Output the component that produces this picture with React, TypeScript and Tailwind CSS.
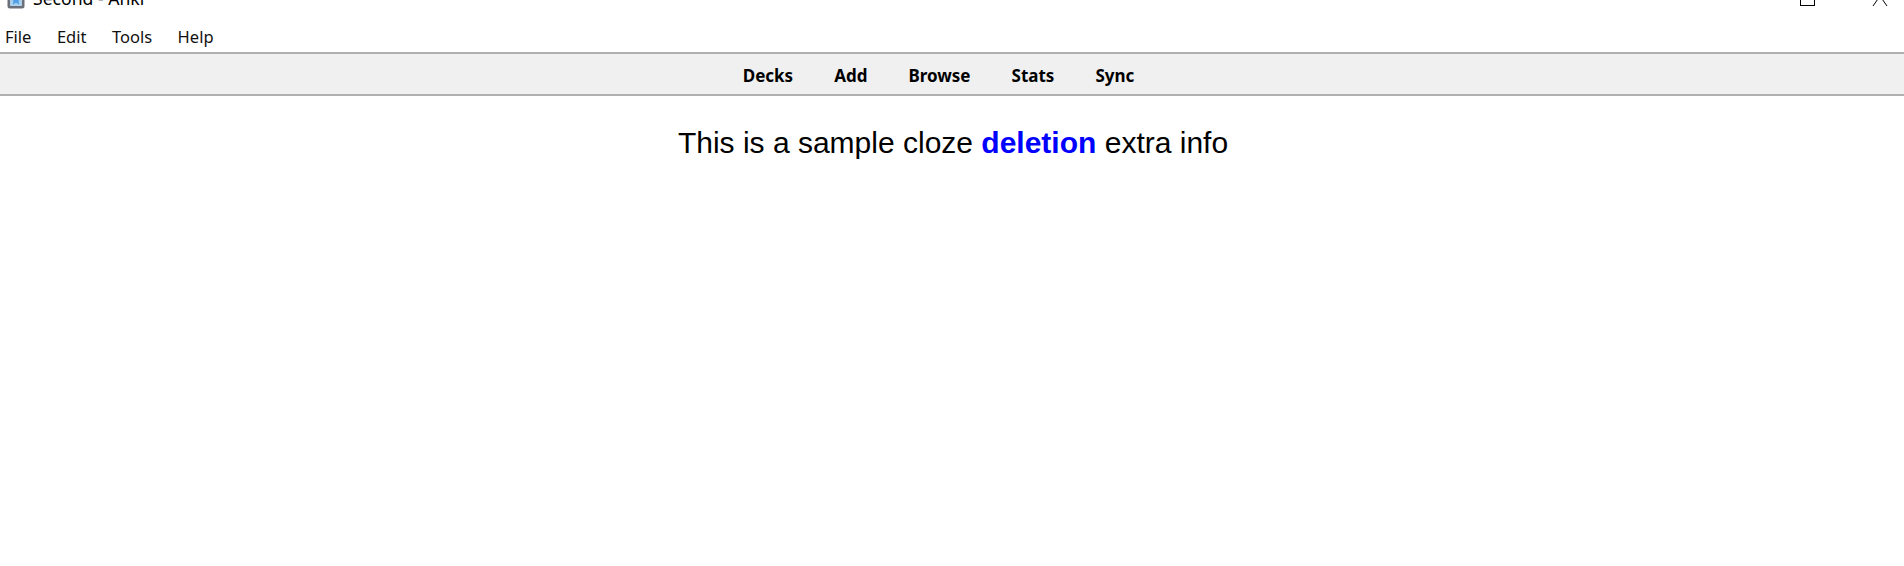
export default function App() {
  const menus = ["File", "Edit", "Tools", "Help"];
  const links = ["Decks", "Add", "Browse", "Stats", "Sync"];
  return (
    <div className="h-[566px] w-[1904px] overflow-hidden bg-white">
      <div className="flex h-[20px] items-start justify-between overflow-hidden bg-white">
        <div className="flex items-start">
          <svg className="ml-[7px] mt-[-9px]" width="18" height="18" viewBox="0 0 18 18">
            <rect x="0.5" y="0.5" width="17" height="17" rx="2.5" fill="#6b6f78" />
            <rect x="3" y="1" width="12" height="14" fill="#a9cfee" />
            <path d="M9 4l1.6 3.3 3.4.4-2.5 2.4.7 3.4L9 11.8l-3.2 1.7.7-3.4L4 7.7l3.4-.4z" fill="#4f9fe6" />
          </svg>
          <span className="ml-[8px] mt-[-14px] font-['Noto_Sans',sans-serif] text-[17.6px] leading-[24px] text-black">Second - Anki</span>
        </div>
        <div className="flex items-start">
          <div className="mr-[57px] mt-[-10px] h-[16px] w-[15px] border border-black" />
          <svg className="mr-[16px] mt-[-5px]" width="16" height="12" viewBox="0 0 16 12" fill="none" stroke="#000" strokeWidth="1">
            <path d="M1 11L8 1l7 10" />
          </svg>
        </div>
      </div>
      <div className="flex h-[32px] items-center gap-[25.5px] pl-[5px] pt-[2px] font-['Noto_Sans',sans-serif] text-[16.5px] text-[#111]">
        {menus.map((m) => (
          <span key={m}>{m}</span>
        ))}
      </div>
      <div className="flex h-[44px] items-center justify-center gap-[41px] border-y-2 border-[#b0b0b0] bg-[#f0f0f0] pr-[27px] pt-[3px] font-['Noto_Sans',sans-serif] text-[17px] font-bold text-black">
        {links.map((l) => (
          <span key={l}>{l}</span>
        ))}
      </div>
      <div className="pl-[2px] pt-[30px] text-center font-['Liberation_Sans',sans-serif] text-[30px] leading-[34px] text-black">
        This is a sample cloze <b className="font-bold text-[#0000ff]">deletion</b> extra info
      </div>
    </div>
  );
}
